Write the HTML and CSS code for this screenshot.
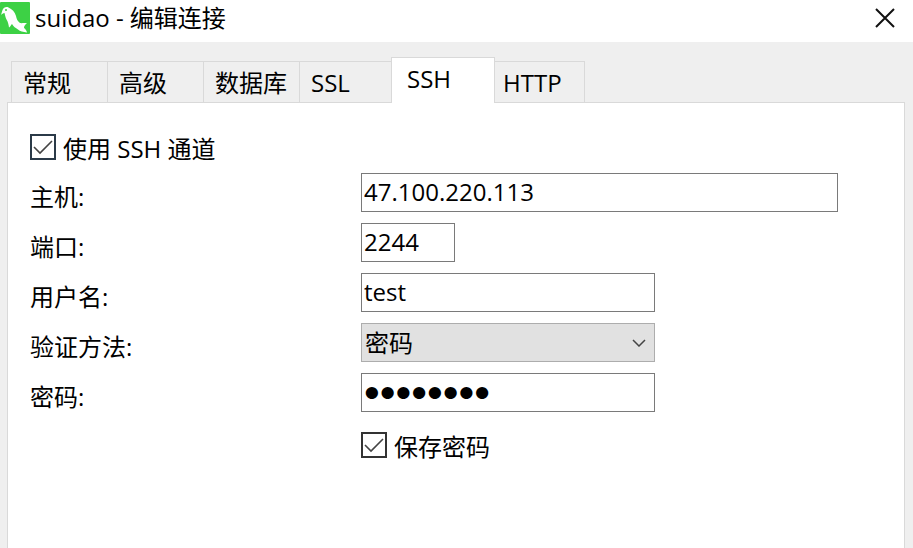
FILE: index.html
```html
<!DOCTYPE html>
<html lang="zh-CN">
<head>
<meta charset="utf-8">
<meta name="viewport" content="width=device-width, initial-scale=1">
<title>suidao - 编辑连接</title>
<link rel="stylesheet" href="styles.css">
</head>
<body>
<header class="titlebar">
  <svg class="logo" viewBox="0 0 30 32" aria-hidden="true">
    <rect width="30" height="32" rx="1" fill="#3dd145"/>
    <path fill="#fff" d="M1 13L2.500 8C3.500 5.500 6 4.500 8.500 5.500C12 7 15 10 16 14C16.500 17 17.500 19 20 21C22 21.500 24.500 20.500 27 21.500C25 22.500 24 24 24 26C25.500 27 26.500 28.500 27 30.500C23 29.500 20 29.500 18 27.500C15.500 26 13.500 24.500 12 22C11 23 10.500 24.500 9 25.500C8.500 22 8 20 6.500 17.500C5.500 15.500 5 13 4.500 11C3 11 2 12 1 13Z"/>
    <circle cx="6" cy="8" r="1" fill="#3dd145"/>
  </svg>
  <h1 class="title">suidao - 编辑连接</h1>
  <button class="close" type="button" aria-label="关闭">
    <svg class="close-icon" viewBox="0 0 20 20" aria-hidden="true"><path d="M1 1L19 19M19 1L1 19"/></svg>
  </button>
</header>
<main class="dialog">
  <div class="tabs" role="tablist">
    <button class="tab" type="button" role="tab">常规</button>
    <button class="tab" type="button" role="tab">高级</button>
    <button class="tab" type="button" role="tab">数据库</button>
    <button class="tab tab-before" type="button" role="tab">SSL</button>
    <button class="tab tab-active" type="button" role="tab" aria-selected="true">SSH</button>
    <button class="tab tab-last" type="button" role="tab">HTTP</button>
  </div>
  <form class="panel">
    <label class="check check-main">
      <span class="box"><input class="check-input" type="checkbox" checked><svg class="tick" viewBox="0 0 26 26" aria-hidden="true"><path d="M4 13L10 19L22 7"/></svg></span>
      <span>使用 SSH 通道</span>
    </label>
    <div class="fields">
      <label class="label" for="host">主机:</label>
      <input class="field" id="host" type="text" value="47.100.220.113">
      <label class="label" for="port">端口:</label>
      <input class="field field-short" id="port" type="text" value="2244">
      <label class="label" for="user">用户名:</label>
      <input class="field field-medium" id="user" type="text" value="test">
      <label class="label" for="method">验证方法:</label>
      <span class="select-wrap">
        <select class="field select" id="method"><option>密码</option></select>
        <svg class="chevron" viewBox="0 0 14 8" aria-hidden="true"><path d="M1 1L7 7L13 1"/></svg>
      </span>
      <label class="label" for="password">密码:</label>
      <input class="field field-medium field-password" id="password" type="password" value="password">
      <label class="check check-save">
        <span class="box"><input class="check-input" type="checkbox" checked><svg class="tick" viewBox="0 0 26 26" aria-hidden="true"><path d="M4 13L10 19L22 7"/></svg></span>
        <span>保存密码</span>
      </label>
    </div>
  </form>
</main>
</body>
</html>
```
FILE: styles.css
```css
* {
  box-sizing: border-box;
}

body {
  display: flex;
  flex-direction: column;
  min-height: 100vh;
  margin: 0;
  background: #efefef;
  color: #000;
  font: 24px/32px "Open Sans", "Noto Sans CJK SC", sans-serif;
}

button,
input,
select {
  margin: 0;
  color: inherit;
  font: inherit;
}

.titlebar {
  display: flex;
  align-items: center;
  height: 42px;
  padding: 0 16px 6px 0;
  background: #fff;
}

.logo {
  width: 30px;
  height: 32px;
}

.title {
  flex: 1;
  margin: 0 0 0 5px;
  font-size: 24px;
  font-weight: 400;
}

.close {
  display: grid;
  place-items: center;
  width: 24px;
  height: 24px;
  padding: 0;
  border: 0;
  background: none;
}

.close-icon {
  width: 20px;
  height: 20px;
  fill: none;
  stroke: #111;
  stroke-width: 2;
}

.dialog {
  display: flex;
  flex: 1;
  flex-direction: column;
  padding: 15px 8px 0 7px;
}

.tabs {
  display: flex;
  align-items: flex-end;
  padding-left: 4px;
}

.tab {
  width: 96px;
  height: 41px;
  padding: 2px 0 0 11px;
  border: solid #d9d9d9;
  border-width: 1px 0 0 1px;
  background: #efefef;
  text-align: left;
  white-space: nowrap;
}

.tab-before {
  width: 92px;
}

.tab-active {
  z-index: 1;
  width: 104px;
  height: 46px;
  margin-bottom: -1px;
  padding: 0 0 4px 15px;
  border-width: 1px 1px 0;
  background: #fff;
}

.tab-last {
  width: 90px;
  padding-left: 8px;
  border-width: 1px 1px 0 0;
}

.panel {
  flex: 1;
  padding: 31px 66px 0 22px;
  border: solid #d9d9d9;
  border-width: 1px 1px 0;
  background: #fff;
}

.check {
  display: flex;
  align-items: flex-end;
  gap: 7px;
  line-height: 30px;
}

.check-main {
  height: 30px;
}

.box {
  display: grid;
  width: 26px;
  height: 26px;
  margin-bottom: 4px;
}

.check-input,
.tick {
  grid-area: 1 / 1;
  width: 26px;
  height: 26px;
}

.check-input {
  appearance: none;
  border: 2px solid #333;
  background: #fff;
}

.check-main .check-input {
  border-color: #2b3a48;
}

.tick {
  z-index: 1;
  fill: none;
  stroke: #444;
  stroke-width: 1.6;
  pointer-events: none;
}

.fields {
  display: grid;
  grid-template-columns: 331px minmax(0, 1fr);
  row-gap: 11px;
  margin-top: 9px;
}

.label {
  padding-top: 9px;
  line-height: 30px;
}

.field {
  width: 100%;
  height: 39px;
  padding: 0 2px;
  border: 1px solid #7a7a7a;
  border-radius: 0;
  background: #fff;
}

input.field {
  padding-bottom: 2px;
}

.field-short {
  width: 94px;
}

.field-medium,
.select-wrap {
  width: 294px;
}

input.field-password {
  padding-bottom: 0;
  font-family: "Liberation Sans", sans-serif;
  font-size: 45px;
}

.select-wrap {
  display: grid;
  align-items: center;
}

.select {
  grid-area: 1 / 1;
  padding: 0 3px;
  border-color: #adadad;
  background: #e1e1e1;
  appearance: none;
}

.chevron {
  z-index: 1;
  grid-area: 1 / 1;
  justify-self: end;
  width: 14px;
  height: 8px;
  margin-right: 9px;
  fill: none;
  stroke: #444;
  stroke-width: 1.5;
  pointer-events: none;
}

.check-save {
  grid-column: 2;
  padding-top: 9px;
}
```
